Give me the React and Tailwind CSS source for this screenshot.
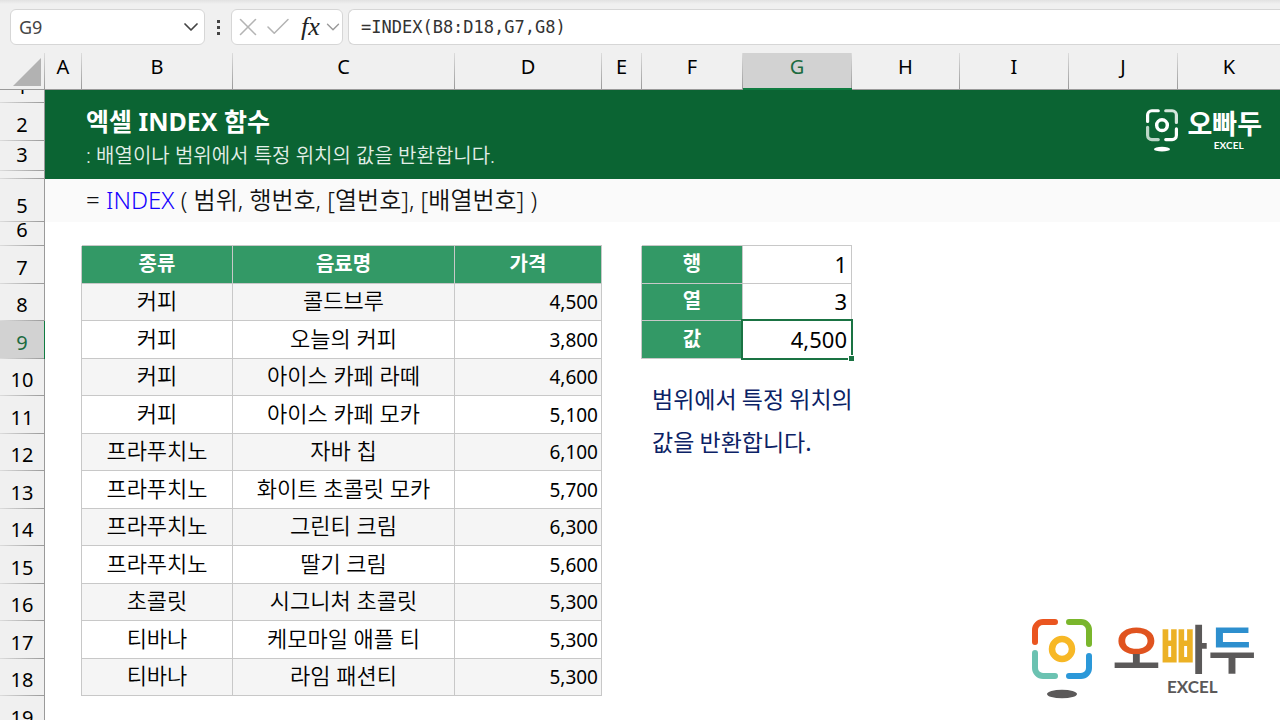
import React from 'react';
import clsx from 'clsx';
import { Check, ChevronDown, X } from 'lucide-react';

const COLUMNS = ['A', 'B', 'C', 'D', 'E', 'F', 'G', 'H', 'I', 'J', 'K'];

const DRINKS = [
  { row: 8, kind: '커피', name: '콜드브루', price: '4,500' },
  { row: 9, kind: '커피', name: '오늘의 커피', price: '3,800' },
  { row: 10, kind: '커피', name: '아이스 카페 라떼', price: '4,600' },
  { row: 11, kind: '커피', name: '아이스 카페 모카', price: '5,100' },
  { row: 12, kind: '프라푸치노', name: '자바 칩', price: '6,100' },
  { row: 13, kind: '프라푸치노', name: '화이트 초콜릿 모카', price: '5,700' },
  { row: 14, kind: '프라푸치노', name: '그린티 크림', price: '6,300' },
  { row: 15, kind: '프라푸치노', name: '딸기 크림', price: '5,600' },
  { row: 16, kind: '초콜릿', name: '시그니처 초콜릿', price: '5,300' },
  { row: 17, kind: '티바나', name: '케모마일 애플 티', price: '5,300' },
  { row: 18, kind: '티바나', name: '라임 패션티', price: '5,300' },
];

function LogoMark({ className, colors }) {
  return (
    <svg viewBox="0 0 60 80" className={className} fill="none" strokeWidth="6" strokeLinecap="round" aria-hidden="true">
      <path d="M3 23V11a8 8 0 0 1 8-8h12" stroke={colors[0]} />
      <path d="M37 3h12a8 8 0 0 1 8 8v14" stroke={colors[1]} />
      <path d="M3 34v15a8 8 0 0 0 8 8h12" stroke={colors[2]} />
      <path d="M57 37v12a8 8 0 0 1-8 8H37" stroke={colors[3]} />
      <circle cx="30" cy="30" r="10" stroke={colors[4]} strokeWidth="6.5" />
      <ellipse cx="30" cy="75" rx="15" ry="4.3" fill={colors[5]} />
    </svg>
  );
}

function BannerLogo() {
  return (
    <div className="flex items-start gap-[9px] pt-[3px] font-['Noto_Sans_CJK_KR',sans-serif] text-white">
      <LogoMark className="h-[43px] w-8" colors={['#fff', '#d5e5dc', '#bcd6c7', '#fff', '#fff', '#fff']} />
      <div className="flex flex-col items-center">
        <span className="text-[27px] leading-7 font-bold">오빠두</span>
        <span className="mt-1 pl-2 font-['Lato',sans-serif] text-[10px] leading-2 font-bold">EXCEL</span>
      </div>
    </div>
  );
}

function SheetLogo() {
  return (
    <div className="absolute right-6 bottom-[21px] flex items-start gap-5 font-['Noto_Sans_CJK_KR',sans-serif]">
      <LogoMark
        className="h-20 w-[60px]"
        colors={['#ea5520', '#7ab62c', '#6bc2b1', '#2b98d9', '#f7b826', '#5b5959']}
      />
      <div className="flex flex-col items-center">
        <div className="text-[52px] leading-[56px] font-bold text-transparent">
          <span className="bg-[linear-gradient(#e0531f_60%,#5b5959_60%)] bg-clip-text">오</span>
          <span className="bg-[linear-gradient(90deg,#ecb125_68%,#5b5959_68%)] bg-clip-text">빠</span>
          <span className="bg-[linear-gradient(#2d8fce_52%,#5b5959_52%)] bg-clip-text">두</span>
        </div>
        <span className="mt-1 pl-4 font-['Lato',sans-serif] text-[17px] leading-4 font-bold text-[#5b5959]">EXCEL</span>
      </div>
    </div>
  );
}

function FormulaBar() {
  return (
    <div>
      <div className="h-1 bg-linear-to-b from-[#e2e2e2] to-[#f0f0f0]" />
      <div className="flex items-center pt-[5px] pb-2 pl-[10px]">
        <div className="relative w-[195px]">
          <select
            aria-label="이름 상자"
            className="h-9 w-full appearance-none rounded-md border border-[#d6d6d6] bg-white pl-2 text-lg leading-8 text-[#444]"
          >
            <option>G9</option>
          </select>
          <ChevronDown className="pointer-events-none absolute top-1.5 right-0.5 size-6 text-[#444]" strokeWidth={1.75} />
        </div>
        <div className="flex w-[26px] flex-col items-center gap-[3px]">
          <span className="size-[3px] bg-[#444]" />
          <span className="size-[3px] bg-[#444]" />
          <span className="size-[3px] bg-[#444]" />
        </div>
        <div className="flex h-9 w-28 items-center rounded-md border border-[#d6d6d6] bg-white pl-px">
          <button type="button" aria-label="취소" className="shrink-0">
            <X className="size-[30px] text-[#b4b4b4]" strokeWidth={1.25} />
          </button>
          <button type="button" aria-label="입력" className="shrink-0">
            <Check className="size-[30px] text-[#b4b4b4]" strokeWidth={1.25} />
          </button>
          <button
            type="button"
            className="ml-2 shrink-0 font-['Liberation_Serif',serif] text-[26px] leading-8 text-[#222] italic"
          >
            fx
          </button>
          <button type="button" aria-label="함수 목록" className="ml-0.5 shrink-0">
            <ChevronDown className="size-[22px] text-[#999]" strokeWidth={1.5} />
          </button>
        </div>
        <input
          aria-label="수식"
          defaultValue="=INDEX(B8:D18,G7,G8)"
          className="ml-[5px] h-9 min-w-0 flex-1 rounded-l-md border border-r-0 border-[#d6d6d6] bg-white pl-3 font-['DejaVu_Sans_Mono',monospace] text-[17px] text-[#333]"
        />
      </div>
    </div>
  );
}

function ColumnHeader({ label, active }) {
  return (
    <th
      scope="col"
      className={clsx(
        'group border-b p-0 text-xl font-normal',
        active ? 'border-[#107c41] bg-[#d2d2d2] text-[#1c6b40]' : 'border-[#9a9a9a] text-black',
      )}
    >
      <div className={clsx('flex h-9', active && 'border-b border-[#107c41]')}>
        <span className="flex-1 leading-7">{label}</span>
        <span className="w-px bg-linear-to-b from-[#dcdcdc] to-[#9a9a9a] group-last:hidden" />
      </div>
    </th>
  );
}

// Numbers sit on the bottom of the row and are cut off when the row is too low
function RowHeader({ label, height, active }) {
  return (
    <th
      scope="row"
      className={clsx(
        'border-r p-0 text-xl font-normal',
        active ? 'border-[#107c41] bg-[#d2d2d2] text-[#1c6b40]' : 'border-[#9a9a9a] bg-[#f0f0f0] text-black',
      )}
    >
      <div className={clsx('flex flex-col justify-end overflow-hidden', height)}>
        {label && <span className="leading-[30px]">{label}</span>}
        <span className="h-px shrink-0 bg-linear-to-r from-[#dcdcdc] to-[#9a9a9a]" />
      </div>
    </th>
  );
}

function Cell({ head, shaded, className, children }) {
  return (
    <td
      className={clsx(
        'border-r border-b border-[#c8c8c8] pt-0 text-center',
        head && 'bg-[#339966] pb-0.5 text-xl leading-7 font-bold text-white',
        shaded && 'bg-[#f5f5f5]',
        className,
      )}
    >
      {children}
    </td>
  );
}

function LookupCells({ row }) {
  if (row === 8) {
    return (
      <>
        <Cell head>열</Cell>
        <Cell className="pr-1 pb-0.5 text-right text-[22px] leading-7">3</Cell>
        <td colSpan={4} />
      </>
    );
  }
  if (row === 9) {
    return (
      <>
        <Cell head>값</Cell>
        <Cell className="relative pr-1 pb-0.5 text-right text-[22px] leading-7">
          4,500
          <span className="absolute -inset-0.5 border-2 border-[#1a7343]" />
          <span className="absolute -right-1 -bottom-1 size-[7px] border border-white bg-[#1a7343]" />
        </Cell>
        <td colSpan={4} />
      </>
    );
  }
  if (row === 10) {
    return (
      <td
        colSpan={6}
        rowSpan={9}
        className="pt-[18px] pl-2.5 align-top font-['Noto_Sans_CJK_KR',sans-serif] text-[23px] leading-[43px] text-[#0b2265]"
      >
        범위에서 특정 위치의
        <br />
        값을 반환합니다.
      </td>
    );
  }
  return null;
}

export default function App() {
  return (
    <div className="relative flex h-screen flex-col overflow-hidden bg-white font-['Noto_Sans','Noto_Sans_CJK_KR',sans-serif] text-black">
      <div className="bg-[#f0f0f0]">
        <FormulaBar />
      </div>

      <table className="w-full table-fixed border-separate border-spacing-0">
        <colgroup>
          <col className="w-[45px]" />
          <col className="w-[37px]" />
          <col className="w-[151px]" />
          <col className="w-[222px]" />
          <col className="w-[147px]" />
          <col className="w-10" />
          <col className="w-[101px]" />
          <col className="w-[109px]" />
          <col className="w-[108px]" />
          <col className="w-[109px]" />
          <col className="w-[109px]" />
          <col />
        </colgroup>
        <thead className="bg-[#f0f0f0]">
          <tr>
            <td className="border-b border-[#9a9a9a] p-0">
              <div className="flex h-9">
                <svg viewBox="0 0 44 36" className="flex-1" aria-hidden="true">
                  <path d="M41 5v28H13z" fill="#b2b2b2" />
                </svg>
                <span className="w-px bg-linear-to-b from-[#dcdcdc] to-[#9a9a9a]" />
              </div>
            </td>
            {COLUMNS.map((label) => (
              <ColumnHeader key={label} label={label} active={label === 'G'} />
            ))}
          </tr>
        </thead>
        <tbody>
          {/* Title banner */}
          <tr>
            <RowHeader label="1" height="h-[13px]" />
            <td colSpan={11} rowSpan={4} className="bg-[#0b6433] p-0 align-top text-white">
              <div className="flex items-start justify-between pt-4 pr-[18px] pl-[41px]">
                <div>
                  <h1 className="text-[25px] leading-[30px] font-bold">엑셀 INDEX 함수</h1>
                  <p className="text-[20px] leading-10 font-[350] text-[#e3efe8]">
                    : 배열이나 범위에서 특정 위치의 값을 반환합니다.
                  </p>
                </div>
                <BannerLogo />
              </div>
            </td>
          </tr>
          <tr>
            <RowHeader label="2" height="h-[38px]" />
          </tr>
          <tr>
            <RowHeader label="3" height="h-[30px]" />
          </tr>
          <tr>
            <RowHeader height="h-2" />
          </tr>

          {/* Syntax */}
          <tr>
            <RowHeader label="5" height="h-[43px]" />
            <td colSpan={11} className="bg-[#fafafa] pt-0 pb-0.5 pl-[41px] text-[24px] leading-8 font-[350] text-[#111]">
              = <span className="text-[#1400ff]">INDEX</span> ( 범위, 행번호, [열번호], [배열번호] )
            </td>
          </tr>
          <tr>
            <RowHeader label="6" height="h-6" />
            <td />
            <td colSpan={3} className="border-b border-[#c8c8c8]" />
            <td />
            <td colSpan={2} className="border-b border-[#c8c8c8]" />
            <td colSpan={4} />
          </tr>

          {/* Price list and lookup cells */}
          <tr>
            <RowHeader label="7" height="h-[38px]" />
            <td className="border-r border-[#c8c8c8]" />
            <Cell head>종류</Cell>
            <Cell head>음료명</Cell>
            <Cell head>가격</Cell>
            <td className="border-r border-[#c8c8c8]" />
            <Cell head>행</Cell>
            <Cell className="pr-1 pb-0.5 text-right text-[22px] leading-7">1</Cell>
            <td colSpan={4} />
          </tr>
          {DRINKS.map(({ row, kind, name, price }) => {
            const shaded = row % 2 === 0;
            return (
              <tr key={row}>
                <RowHeader label={row} height={shaded ? 'h-[37px]' : 'h-[38px]'} active={row === 9} />
                <td className="border-r border-[#c8c8c8]" />
                <Cell shaded={shaded} className="pb-1 text-[22px] leading-7 font-[350]">{kind}</Cell>
                <Cell shaded={shaded} className="pb-1 text-[22px] leading-7 font-[350]">{name}</Cell>
                <Cell shaded={shaded} className="pr-[3px] pb-0 text-right text-[19px] leading-7">{price}</Cell>
                <td className={clsx(row < 10 && 'border-r border-[#c8c8c8]')} />
                <LookupCells row={row} />
              </tr>
            );
          })}
          <tr>
            <RowHeader label="19" height="h-[38px]" />
            <td colSpan={11} />
          </tr>
        </tbody>
      </table>

      <SheetLogo />
    </div>
  );
}
